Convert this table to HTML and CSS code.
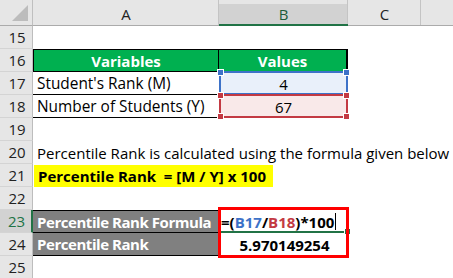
FILE: index.html
```html
<!DOCTYPE html>
<html>
<head>
<meta charset="utf-8">
<link rel="stylesheet" href="styles.css">
</head>
<body>
<div class="sheet">
  <div class="corner"><span class="tri"></span></div>
  <div class="colhead">A</div>
  <div class="colhead sel">B</div>
  <div class="colhead">C</div>
  <div class="colhead last"></div>

  <div class="rn">15</div><div class="c span4"></div>

  <div class="rn">16</div>
  <div class="c hdr hdr-a">Variables</div>
  <div class="c hdr hdr-b">Values</div>
  <div class="c span2"></div>

  <div class="rn">17</div>
  <div class="c lab">Student's Rank (M)</div>
  <div class="c val blue">4</div>
  <div class="c span2"></div>

  <div class="rn">18</div>
  <div class="c lab">Number of Students (Y)</div>
  <div class="c val red">67</div>
  <div class="c span2"></div>

  <div class="rn">19</div><div class="c span4"></div>

  <div class="rn">20</div>
  <div class="c span4 txt">Percentile Rank is calculated using the formula given below</div>

  <div class="rn">21</div>
  <div class="c span4 txt"><span class="hl">Percentile Rank&nbsp; = [M / Y] x 100</span></div>

  <div class="rn">22</div><div class="c span4"></div>

  <div class="rn act">23</div>
  <div class="c gray top">Percentile Rank Formula</div>
  <div class="c formula"><span>=(</span><span class="fb">B17</span><span>/</span><span class="fr">B18</span><span>)*100</span><span class="caret"></span></div>
  <div class="c span2"></div>

  <div class="rn">24</div>
  <div class="c gray">Percentile Rank</div>
  <div class="c result">5.970149254</div>
  <div class="c span2"></div>

  <div class="rn">25</div><div class="c span4"></div>

  <div class="refbox blue-box">
    <i class="h tl"></i><i class="h tr"></i>
  </div>
  <div class="refbox red-box">
    <i class="h tl"></i><i class="h tr"></i><i class="h bl"></i><i class="h br"></i>
  </div>
  <div class="active-line"><i class="h end"></i></div>
  <div class="redframe"></div>
</div>
</body>
</html>
```

FILE: styles.css
```css
html, body {
  margin: 0;
  padding: 0;
  background: #ffffff;
  overflow: hidden;
}
.sheet {
  position: relative;
  display: grid;
  grid-template-columns: 33px 186px 129px 73px 32px;
  grid-template-rows: 26px repeat(11, 23px);
  font-family: "Open Sans", "Noto Sans", sans-serif;
  font-size: 15px;
  color: #000;
}
.corner {
  background: #e6e6e6;
  border-right: 1px solid #bfbfbf;
  border-bottom: 1px solid #ababab;
  box-sizing: border-box;
  position: relative;
}
.tri {
  position: absolute;
  right: 4px;
  bottom: 4px;
  width: 0;
  height: 0;
  border-left: 16px solid transparent;
  border-bottom: 16px solid #bcbcbc;
}
.colhead {
  background: #e6e6e6;
  border-bottom: 1px solid #ababab;
  box-sizing: border-box;
  display: flex;
  align-items: center;
  justify-content: center;
  padding-top: 3px;
  color: #222;
  font-size: 15px;
  box-shadow: inset -1px 0 0 #c4c4c4;
  background-clip: padding-box;
}
.colhead.sel {
  background: linear-gradient(#e6e6e6 0 4px, #d2d2d2 4px);
  border-bottom: 2px solid #217346;
  color: #1f5c3a;
}
.colhead.last {
  box-shadow: none;
}
.rn {
  background: #e6e6e6;
  border-right: 1px solid #bdbdbd;
  border-bottom: 1px solid #d4d4d4;
  box-sizing: border-box;
  display: flex;
  align-items: center;
  justify-content: center;
  font-size: 15px;
  color: #222;
  padding-left: 2px;
}
.rn.act {
  background: #d2d2d2;
  border-right: 2px solid #217346;
  color: #217346;
}
.c {
  box-sizing: border-box;
  display: flex;
  align-items: center;
  white-space: nowrap;
  min-width: 0;
}
.span4 { grid-column: span 4; }
.span2 { grid-column: span 2; }
.hdr {
  background: #00b050;
  color: #fff;
  font-weight: 700;
  justify-content: center;
  border-top: 1px solid #000;
  border-bottom: 1px solid #000;
}
.hdr-a { border-left: 1px solid #000; border-right: 1px solid #000; }
.hdr-b { border-right: 2px solid #000; }
.lab {
  padding-left: 4px;
  border-bottom: 1px solid #000;
  font-size: 15.4px;
}
.val {
  justify-content: center;
}
.val.blue { background: #e9f0fa; }
.val.red { background: #f9e9e9; }
.txt {
  padding-left: 4px;
}
.hl {
  background: #ffff00;
  font-weight: 700;
  padding: 0 7px 0 4px;
  margin-left: -3px;
  height: 22px;
  display: flex;
  align-items: center;
}
.gray {
  background: #808080;
  color: #fff;
  font-weight: 700;
  padding-left: 4px;
  border-bottom: 1px solid #000;
  letter-spacing: -0.45px;
}
.gray.top { border-top: 1px solid #000; }
.formula {
  font-weight: 700;
  padding-left: 2px;
}
.fb { color: #3d72c8; }
.fr { color: #c33a43; }
.caret {
  display: inline-block;
  width: 1px;
  height: 17px;
  background: #000;
  margin-left: 1px;
}
.result {
  font-weight: 700;
  justify-content: center;
  padding-left: 2px;
}
.refbox {
  position: absolute;
  left: 219px;
  width: 129px;
  height: 24px;
  box-sizing: border-box;
  border: 2px solid;
}
.blue-box { top: 71px; border-color: #3d72c8; color: #3d72c8; }
.red-box { top: 94px; border-color: #c33a43; color: #c33a43; }
.h {
  position: absolute;
  width: 5px;
  height: 5px;
  background: currentColor;
  outline: 1px solid #fff;
}
.h.tl { left: -3px; top: -3px; }
.h.tr { right: -3px; top: -3px; }
.h.bl { left: -3px; bottom: -3px; }
.h.br { right: -3px; bottom: -3px; }
.active-line {
  position: absolute;
  left: 220px;
  top: 231px;
  width: 126px;
  height: 2px;
  background: #217346;
  color: #217346;
}
.h.end { right: -4px; top: -2px; }
.redframe {
  position: absolute;
  left: 218px;
  top: 207px;
  width: 131px;
  height: 51px;
  box-sizing: border-box;
  border: 3px solid #ff0000;
}
```
